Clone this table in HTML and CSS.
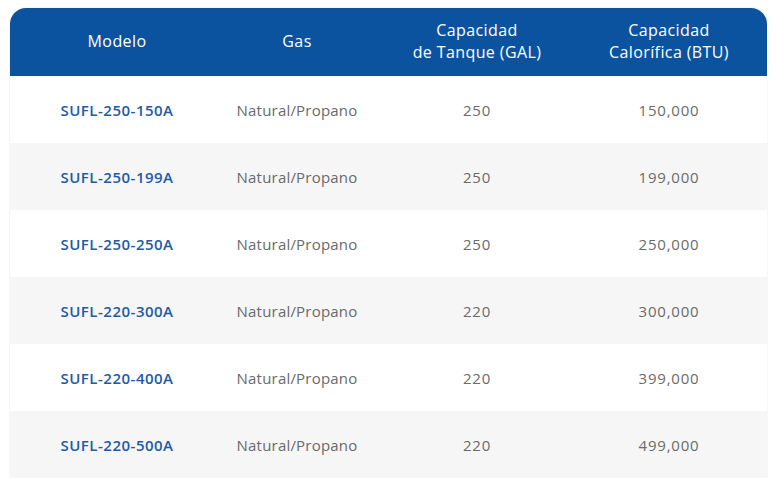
FILE: index.html
```html
<!DOCTYPE html>
<html lang="es">
<head>
<meta charset="utf-8">
<title>Especificaciones</title>
<link rel="stylesheet" href="styles.css">
</head>
<body>
<div class="table">
  <div class="row head">
    <div class="cell">Modelo</div>
    <div class="cell">Gas</div>
    <div class="cell">Capacidad<br>de Tanque (GAL)</div>
    <div class="cell">Capacidad<br>Calorífica (BTU)</div>
  </div>
  <div class="row">
    <div class="cell model">SUFL-250-150A</div>
    <div class="cell gas">Natural/Propano</div>
    <div class="cell num">250</div>
    <div class="cell num">150,000</div>
  </div>
  <div class="row alt">
    <div class="cell model">SUFL-250-199A</div>
    <div class="cell gas">Natural/Propano</div>
    <div class="cell num">250</div>
    <div class="cell num">199,000</div>
  </div>
  <div class="row">
    <div class="cell model">SUFL-250-250A</div>
    <div class="cell gas">Natural/Propano</div>
    <div class="cell num">250</div>
    <div class="cell num">250,000</div>
  </div>
  <div class="row alt">
    <div class="cell model">SUFL-220-300A</div>
    <div class="cell gas">Natural/Propano</div>
    <div class="cell num">220</div>
    <div class="cell num">300,000</div>
  </div>
  <div class="row">
    <div class="cell model">SUFL-220-400A</div>
    <div class="cell gas">Natural/Propano</div>
    <div class="cell num">220</div>
    <div class="cell num">399,000</div>
  </div>
  <div class="row alt">
    <div class="cell model">SUFL-220-500A</div>
    <div class="cell gas">Natural/Propano</div>
    <div class="cell num">220</div>
    <div class="cell num">499,000</div>
  </div>
</div>
</body>
</html>
```
FILE: styles.css
```css
html, body {
  margin: 0;
  padding: 0;
  background: #ffffff;
}
body {
  padding: 8px 10px 0 10px;
  font-family: "Open Sans", "Noto Sans", sans-serif;
}
.table {
  width: 757px;
  border-radius: 16px 16px 0 0;
  overflow: hidden;
  box-shadow: 0 0 2px rgba(0, 0, 0, 0.12);
}
.row {
  display: grid;
  grid-template-columns: 214px 146px 214px 170px;
  padding-right: 13px;
  height: 67px;
  align-items: center;
  background: #ffffff;
}
.row.alt {
  background: #f6f6f6;
}
.row.head {
  height: 68px;
  box-sizing: border-box;
  padding-bottom: 3px;
  background: #0b539f;
}
.cell {
  text-align: center;
  font-size: 15px;
  font-weight: 500;
  color: #6a6a6a;
}
.head .cell {
  color: #ffffff;
  font-size: 16px;
  letter-spacing: 0.4px;
  line-height: 22px;
}
.cell.model {
  color: #1c5ba6;
  font-weight: 600;
  letter-spacing: 0.5px;
}
.cell.gas {
  letter-spacing: 0.2px;
}
.cell.num {
  letter-spacing: 0.8px;
}
```
